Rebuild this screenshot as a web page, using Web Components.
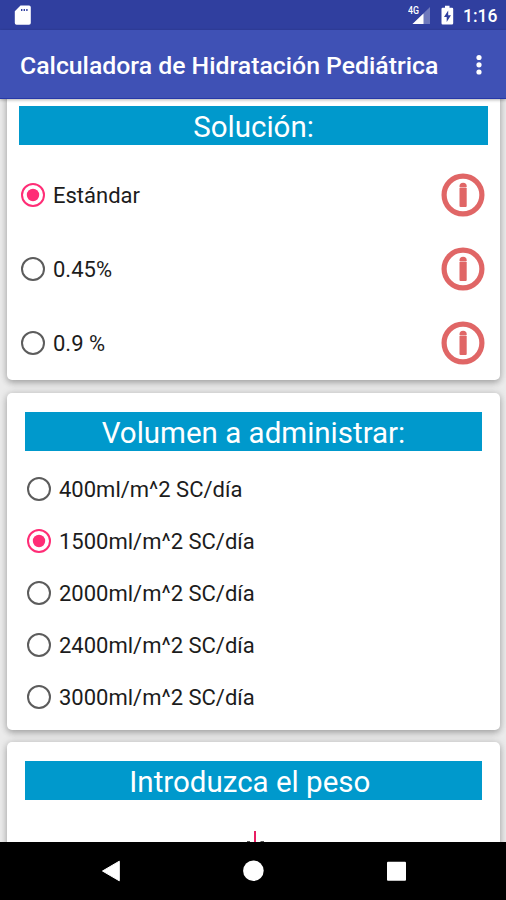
<!DOCTYPE html>
<html lang="es">
<head>
<meta charset="utf-8">
<title>Calculadora de Hidratación Pediátrica</title>
<style>
body {
    margin: 0;
    font-family: Roboto, "Liberation Sans", sans-serif;
}
</style>
</head>
<body>
<hydration-app></hydration-app>
<script>
"use strict";

const define = (name, html) => {
    const template = document.createElement('template');
    template.innerHTML = html;
    customElements.define(name, class extends HTMLElement {
        constructor() {
            super();
            this.attachShadow({ mode: 'open' });
            this.shadowRoot.appendChild(template.content.cloneNode(true));
        }
    });
};

define('status-bar', `<style>
:host {
    display: flex;
    align-items: center;
    box-sizing: border-box;
    height: 30px;
    padding: 0 9px 0 14px;
    background: #303f9f;
    color: #fff;
}
svg { display: block; }
.signal { margin-left: auto; }
.battery { margin-left: 10px; }
.time {
    margin-left: 9px;
    width: 34px;
    font-size: 17.5px;
    font-weight: 500;
    line-height: 30px;
    white-space: nowrap;
    padding-top: 2px;
}
</style>
<svg width="18" height="30"><path fill="#fff" fill-rule="evenodd" d="M6.500 5.500H15a1.800 1.800 0 0 1 1.800 1.800V23a1.800 1.800 0 0 1-1.800 1.800H2.600A1.800 1.800 0 0 1 .8 23V11.300ZM7 9v2h1.400V9ZM9.600 9v2H11V9ZM12.200 9v2h1.400V9Z"/></svg>
<svg class="signal" width="23" height="30">
    <path fill="#fff" fill-opacity=".3" d="M22 7v17H4.500Z"/>
    <path fill="#fff" d="M15.500 13.500V24H4.500Z"/>
    <path fill="#303f9f" d="M0 5h12v10H0Z"/>
    <text x="0" y="14.200" fill="#fff" font-size="10" font-weight="500" textLength="11" lengthAdjust="spacingAndGlyphs">4G</text>
</svg>
<svg class="battery" width="13" height="30"><path fill="#fff" fill-rule="evenodd" d="M4 5.800h4.500v2H11a1.200 1.200 0 0 1 1.200 1.200v14.300a1.200 1.200 0 0 1-1.200 1.200H1.700A1.200 1.200 0 0 1 .5 23.300V9a1.200 1.200 0 0 1 1.200-1.200H4ZM7.200 10.500 3 17h2.700v5L10 15.200H7.200Z"/></svg>
<span class="time"><slot></slot></span>
`);

define('app-bar', `<style>
:host {
    position: relative;
    z-index: 1;
    display: flex;
    align-items: center;
    justify-content: space-between;
    box-sizing: border-box;
    height: 69px;
    padding: 2px 23px 0 20px;
    background: #3f51b5;
    border-bottom: 1px solid #2638a8;
    box-shadow: 0 1px 3px rgba(0,0,0,.3);
    color: #fff;
}
h1 {
    margin: 0;
    font-size: 24.8px;
    font-weight: 500;
    white-space: nowrap;
}
svg { display: block; }
</style>
<h1><slot></slot></h1>
<svg width="8" height="24" fill="#fff"><circle cx="4" cy="4.500" r="2.600"/><circle cx="4" cy="11.800" r="2.600"/><circle cx="4" cy="19" r="2.600"/></svg>
`);

define('section-card', `<style>
:host {
    display: block;
    box-sizing: border-box;
    margin: 0 6px 12.5px 7px;
    padding: 19px 18px 6px;
    background: #fff;
    border-radius: 5px;
    box-shadow: 0 3px 6px rgba(0,0,0,.24), 0 0 8px rgba(0,0,0,.14);
}
h2 {
    margin: 0;
    height: 39px;
    line-height: 42px;
    background: #0099cc;
    color: #fff;
    font-size: 29.5px;
    font-weight: 400;
    text-align: center;
    white-space: pre;
}
</style>
<h2><slot name="heading"></slot></h2>
<slot></slot>
`);

define('info-icon', `<style>
:host { display: block; }
svg { display: block; }
</style>
<svg width="44" height="45" viewBox="0 0 44 45">
    <circle cx="22" cy="23" r="18.900" fill="none" stroke="#e06666" stroke-width="5.200"/>
    <rect x="18.500" y="15.500" width="7.200" height="19.500" rx="1" fill="#e06666"/>
    <path fill="#e06666" d="M18.500 15v-.7a3.600 3.600 0 0 1 7.200 0v.7Z"/>
</svg>
`);

define('radio-option', `<style>
:host {
    display: flex;
    align-items: center;
    height: var(--row-height, 52px);
    color: #1c1c1c;
    font-size: 22px;
}
.ring {
    display: block;
    width: 24px;
    height: 25px;
    margin-right: 8px;
}
circle {
    fill: none;
    stroke: #5c5c5c;
    stroke-width: 2;
}
.dot { display: none; }
:host([checked]) circle { stroke: #ff2d76; }
:host([checked]) .dot {
    display: inline;
    fill: #ff2d76;
    stroke: none;
}
.label {
    white-space: nowrap;
    padding-top: 2px;
}
.end { margin-left: auto; }
</style>
<svg class="ring" viewBox="0 0 24 25"><circle cx="12" cy="13" r="11"/><circle class="dot" cx="12" cy="13" r="6.200"/></svg>
<span class="label"><slot></slot></span>
<span class="end"><slot name="end"></slot></span>
`);

define('weight-field', `<style>
:host {
    display: flex;
    justify-content: center;
    padding-top: 31px;
}
svg { display: block; }
</style>
<svg width="30" height="40">
    <path stroke="#e91e63" stroke-width="2" d="M16 0v30"/>
    <path stroke="#222" stroke-width="1.500" d="M8 11h3M21.500 11h3.500"/>
</svg>
`);

define('nav-bar', `<style>
:host {
    display: block;
    height: 58px;
    background: #000;
}
svg { display: block; }
</style>
<svg width="506" height="58" fill="#fff">
    <path d="M102.500 29 119.300 19.200v19.600Z" stroke="#fff" stroke-linejoin="round"/>
    <circle cx="253.400" cy="28.800" r="10.300"/>
    <rect x="387" y="19.800" width="19" height="19" rx="1"/>
</svg>
`);

define('hydration-app', `<style>
:host {
    display: grid;
    grid-template-rows: 30px 69px 1fr 58px;
    width: 506px;
    height: 900px;
    overflow: hidden;
    background: #ebebeb;
}
main {
    min-height: 0;
    overflow: hidden;
}
.solution {
    --row-height: 74px;
    margin-top: -9px;
    height: 290px;
    padding: 16px 12px 0;
}
.solution radio-option:first-of-type { margin-top: 12px; }
.solution radio-option { padding: 0 3px 0 2px; }
.volume { height: 337px; }
.volume radio-option { padding-left: 2px; }
.volume radio-option:first-of-type { margin-top: 12px; }
.weight { height: 140px; }
</style>
<status-bar>1:16</status-bar>
<app-bar>Calculadora de Hidratación Pediátrica</app-bar>
<main>
    <section-card class="solution">
        <span slot="heading">Solución:</span>
        <radio-option checked>Estándar<info-icon slot="end"></info-icon></radio-option>
        <radio-option>0.45%<info-icon slot="end"></info-icon></radio-option>
        <radio-option>0.9 %<info-icon slot="end"></info-icon></radio-option>
    </section-card>
    <section-card class="volume">
        <span slot="heading">Volumen a administrar:</span>
        <radio-option>400ml/m^2 SC/día</radio-option>
        <radio-option checked>1500ml/m^2 SC/día</radio-option>
        <radio-option>2000ml/m^2 SC/día</radio-option>
        <radio-option>2400ml/m^2 SC/día</radio-option>
        <radio-option>3000ml/m^2 SC/día</radio-option>
    </section-card>
    <section-card class="weight">
        <span slot="heading">Introduzca el peso&nbsp;</span>
        <weight-field></weight-field>
    </section-card>
</main>
<nav-bar></nav-bar>
`);
</script>
</body>
</html>
